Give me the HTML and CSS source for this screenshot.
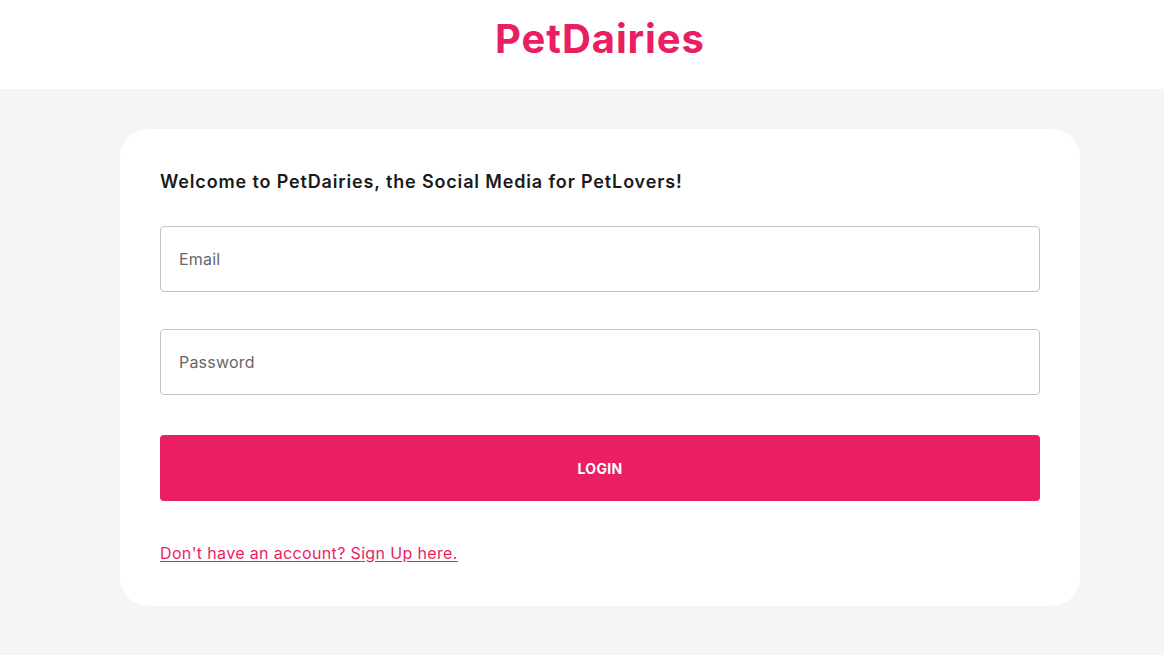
FILE: index.html
```html
<!DOCTYPE html>
<html>
<head>
<meta charset="utf-8">
<link rel="stylesheet" href="styles.css">
</head>
<body>
<header class="topbar">
  <h1 class="brand">PetDairies</h1>
</header>
<main class="page">
  <section class="card">
    <h2 class="welcome">Welcome to PetDairies, the Social Media for PetLovers!</h2>
    <form class="form">
      <div class="field"><input class="input" type="text" placeholder="Email"></div>
      <div class="field"><input class="input" type="password" placeholder="Password"></div>
      <button class="btn" type="button">LOGIN</button>
    </form>
    <a class="signup" href="#">Don't have an account? Sign Up here.</a>
  </section>
</main>
</body>
</html>
```
FILE: styles.css
```css
* { box-sizing: border-box; }
html, body { margin: 0; padding: 0; }
body {
  background: #f5f5f5;
  font-family: Inter, "Noto Sans", "Liberation Sans", sans-serif;
  height: 655px;
  overflow: hidden;
}
.topbar {
  background: #ffffff;
  height: 89px;
  display: flex;
  align-items: center;
  justify-content: center;
  padding-left: 36px;
}
.brand {
  margin: 0;
  color: #e91e63;
  font-size: 40px;
  font-weight: 700;
  letter-spacing: 0.9px;
  line-height: 1;
  padding-bottom: 12px;
}
.page {
  padding: 40px 84px 0 120px;
}
.card {
  background: #ffffff;
  width: 960px;
  border-radius: 28px;
  padding: 41px 40px 40px 40px;
  height: 477px;
}
.welcome {
  margin: 0;
  font-size: 18px;
  font-weight: 600;
  color: #1a1a1a;
  line-height: 24px;
  letter-spacing: 0.85px;
}
.form {
  display: flex;
  flex-direction: column;
  margin-top: 32px;
}
.field { margin-bottom: 37px; }
.field + .field { margin-bottom: 40px; }
.input {
  display: block;
  width: 100%;
  height: 66px;
  border: 1px solid #c4c4c4;
  border-radius: 4px;
  padding: 0 18px;
  font-family: inherit;
  font-size: 16px;
  letter-spacing: 0.2px;
  color: #333;
  background: #fff;
  outline: none;
}
.input::placeholder { color: #666666; }
.btn {
  height: 66px;
  width: 100%;
  border: none;
  border-radius: 4px;
  background: #e91e63;
  color: #ffffff;
  font-family: inherit;
  font-size: 14px;
  font-weight: 700;
  letter-spacing: 0.3px;
}
.signup {
  display: inline-block;
  margin-top: 42px;
  color: #e91e63;
  font-size: 16px;
  letter-spacing: 0.35px;
  text-decoration: underline;
  text-underline-offset: 2px;
}
```
